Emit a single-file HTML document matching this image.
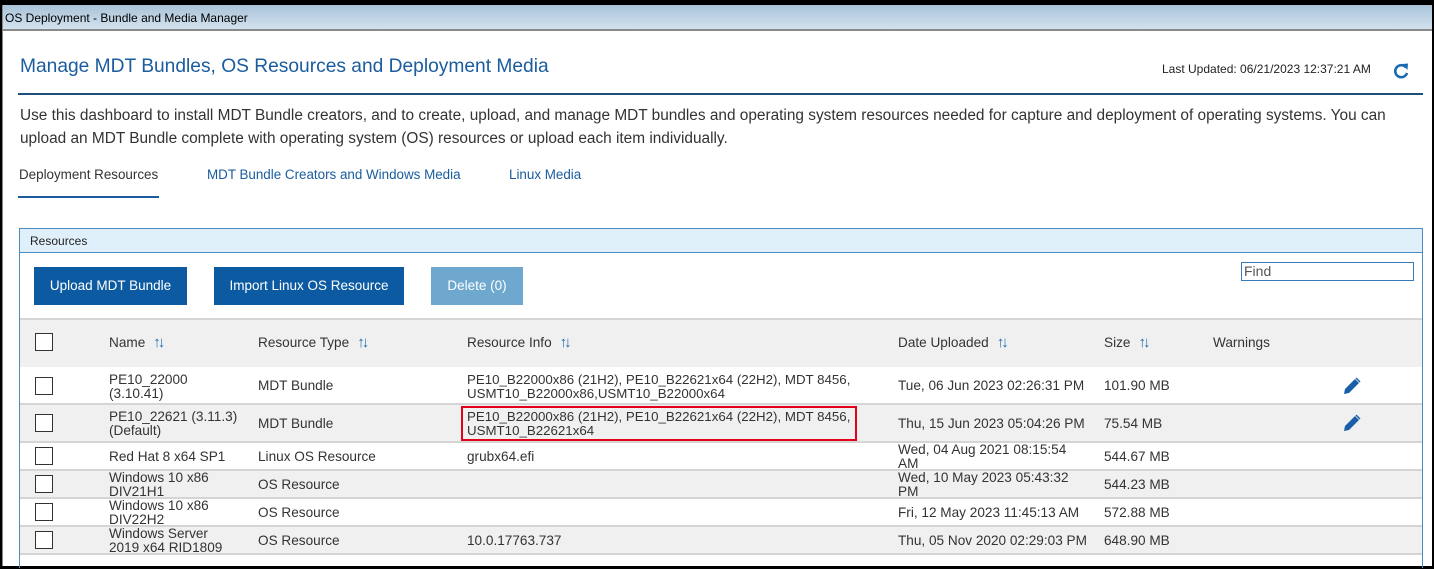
<!DOCTYPE html>
<html><head><style>
*{margin:0;padding:0;box-sizing:border-box}
body{width:1434px;height:569px;background:#000;position:relative;overflow:hidden;font-family:"Liberation Sans",Arial,sans-serif;color:#333}
.a{position:absolute;white-space:nowrap}
#win{position:absolute;left:2px;top:5px;width:1430px;height:561px;background:#fff;border-left:1px solid #888}
#tb{position:absolute;left:0;top:0;width:100%;height:26px;background:linear-gradient(#a9c3d8,#d3e2ee);border-bottom:2px solid #8a8a8a;font-size:12px;color:#000;padding:6px 0 0 2px}
.btn{position:absolute;top:267px;height:38px;background:#0b5aa2;color:#fff;font-size:13.5px;text-align:center;line-height:38px}
.row{position:absolute;left:20px;width:1402px;border-bottom:2px solid #d5d5d5}
.cb{position:absolute;left:35px;width:18px;height:18px;border:1.5px solid #333;background:#fff}
.t{position:absolute;font-size:13.6px;line-height:14px;color:#333;white-space:nowrap}
.s{color:#1a6bb0;font-size:15px;margin-left:8px;letter-spacing:-3px;font-weight:bold}
</style></head><body>
<div id="win">
<div id="tb">OS Deployment - Bundle and Media Manager</div>
</div>
<div class="a" style="left:20px;top:56px;font-size:19.2px;color:#1a5c9e">Manage MDT Bundles, OS Resources and Deployment Media</div>
<div class="a" style="left:1162px;top:62px;font-size:12px;color:#222">Last Updated: 06/21/2023 12:37:21 AM</div>
<svg class="a" style="left:1392px;top:62px" width="18" height="18" viewBox="0 0 18 18"><path d="M14 5.5A6 6 0 1 0 15 11" fill="none" stroke="#1a6bb0" stroke-width="2.6"/><path d="M10 2L16 1.5 15.5 8z" fill="#1a6bb0"/></svg>
<div class="a" style="left:18px;top:93px;width:1405px;height:2px;background:#1f4e79"></div>
<div class="a" style="left:20px;top:104px;font-size:15.4px;line-height:23px;color:#333">Use this dashboard to install MDT Bundle creators, and to create, upload, and manage MDT bundles and operating system resources needed for capture and deployment of operating systems. You can<br>upload an MDT Bundle complete with operating system (OS) resources or upload each item individually.</div>
<div class="a" style="left:19px;top:167px;font-size:13.4px;color:#333">Deployment Resources</div>
<div class="a" style="left:207px;top:167px;font-size:13.4px;color:#1a5c9e">MDT Bundle Creators and Windows Media</div>
<div class="a" style="left:509px;top:167px;font-size:13.4px;color:#1a5c9e">Linux Media</div>
<div class="a" style="left:18px;top:196px;width:141px;height:2px;background:#1a5c9e"></div>

<div class="a" style="left:19px;top:228px;width:1404px;height:340px;border:1px solid #4a8cc0;border-bottom:none"></div>
<div class="a" style="left:20px;top:229px;width:1402px;height:24px;background:#dff0fb;border-bottom:1px solid #4a8cc0;font-size:12px;padding:5px 0 0 10px;color:#222">Resources</div>
<div class="btn" style="left:34px;width:153px">Upload MDT Bundle</div>
<div class="btn" style="left:214px;width:190px">Import Linux OS Resource</div>
<div class="btn" style="left:431px;width:92px;background:#6fa8cf">Delete (0)</div>
<div class="a" style="left:1241px;top:262px;width:173px;height:19px;border:1px solid #3a7ab8;font-size:14px;color:#555;padding-left:2px;line-height:17px">Find</div>

<div class="row" style="top:318px;height:49px;background:#f0f0f0;border-top:2px solid #d5d5d5;border-bottom:none"></div>
<div class="cb" style="top:333px"></div>
<div class="t" style="left:109px;top:336px">Name<span class="s">↑↓</span></div>
<div class="t" style="left:258px;top:336px">Resource Type<span class="s">↑↓</span></div>
<div class="t" style="left:467px;top:336px">Resource Info<span class="s">↑↓</span></div>
<div class="t" style="left:898px;top:336px">Date Uploaded<span class="s">↑↓</span></div>
<div class="t" style="left:1104px;top:336px">Size<span class="s">↑↓</span></div>
<div class="t" style="left:1213px;top:336px">Warnings</div>

<div class="row" style="top:367px;height:38px;background:#fff"></div>
<div class="row" style="top:405px;height:38px;background:#f0f0f0"></div>
<div class="row" style="top:443px;height:28px;background:#fff"></div>
<div class="row" style="top:471px;height:28px;background:#f0f0f0"></div>
<div class="row" style="top:499px;height:28px;background:#fff"></div>
<div class="row" style="top:527px;height:28px;background:#f0f0f0"></div>

<div class="cb" style="top:377px"></div>
<div class="t" style="left:109px;top:373px">PE10_22000<br>(3.10.41)</div>
<div class="t" style="left:258px;top:379px">MDT Bundle</div>
<div class="t" style="left:467px;top:373px;font-size:13.3px">PE10_B22000x86 (21H2), PE10_B22621x64 (22H2), MDT 8456,<br>USMT10_B22000x86,USMT10_B22000x64</div>
<div class="t" style="left:898px;top:379px">Tue, 06 Jun 2023 02:26:31 PM</div>
<div class="t" style="left:1104px;top:379px">101.90 MB</div>

<div class="cb" style="top:414px"></div>
<div class="t" style="left:109px;top:410px">PE10_22621 (3.11.3)<br>(Default)</div>
<div class="t" style="left:258px;top:417px">MDT Bundle</div>
<div class="a" style="left:461px;top:406px;width:396px;height:35px;border:2px solid #e4001b"></div>
<div class="t" style="left:467px;top:410px;font-size:13.3px">PE10_B22000x86 (21H2), PE10_B22621x64 (22H2), MDT 8456,<br>USMT10_B22621x64</div>
<div class="t" style="left:898px;top:417px">Thu, 15 Jun 2023 05:04:26 PM</div>
<div class="t" style="left:1104px;top:417px">75.54 MB</div>

<div class="cb" style="top:447px"></div>
<div class="t" style="left:109px;top:450px">Red Hat 8 x64 SP1</div>
<div class="t" style="left:258px;top:450px">Linux OS Resource</div>
<div class="t" style="left:467px;top:450px">grubx64.efi</div>
<div class="t" style="left:898px;top:443px">Wed, 04 Aug 2021 08:15:54<br>AM</div>
<div class="t" style="left:1104px;top:450px">544.67 MB</div>

<div class="cb" style="top:475px"></div>
<div class="t" style="left:109px;top:471px">Windows 10 x86<br>DIV21H1</div>
<div class="t" style="left:258px;top:478px">OS Resource</div>
<div class="t" style="left:898px;top:471px">Wed, 10 May 2023 05:43:32<br>PM</div>
<div class="t" style="left:1104px;top:478px">544.23 MB</div>

<div class="cb" style="top:503px"></div>
<div class="t" style="left:109px;top:499px">Windows 10 x86<br>DIV22H2</div>
<div class="t" style="left:258px;top:506px">OS Resource</div>
<div class="t" style="left:898px;top:506px">Fri, 12 May 2023 11:45:13 AM</div>
<div class="t" style="left:1104px;top:506px">572.88 MB</div>

<div class="cb" style="top:531px"></div>
<div class="t" style="left:109px;top:527px">Windows Server<br>2019 x64 RID1809</div>
<div class="t" style="left:258px;top:534px">OS Resource</div>
<div class="t" style="left:467px;top:534px">10.0.17763.737</div>
<div class="t" style="left:898px;top:534px">Thu, 05 Nov 2020 02:29:03 PM</div>
<div class="t" style="left:1104px;top:534px">648.90 MB</div>

<svg class="a" style="left:1342px;top:376px" width="20" height="20" viewBox="0 0 20 20"><path d="M2 18L3 13 13 3 17 7 7 17z" fill="#1a5ea8"/><path d="M14.5 1.5L18.5 5.5 17.5 6.5 13.5 2.5z" fill="#1a5ea8"/></svg>
<svg class="a" style="left:1342px;top:413px" width="20" height="20" viewBox="0 0 20 20"><path d="M2 18L3 13 13 3 17 7 7 17z" fill="#1a5ea8"/><path d="M14.5 1.5L18.5 5.5 17.5 6.5 13.5 2.5z" fill="#1a5ea8"/></svg>
</body></html>
